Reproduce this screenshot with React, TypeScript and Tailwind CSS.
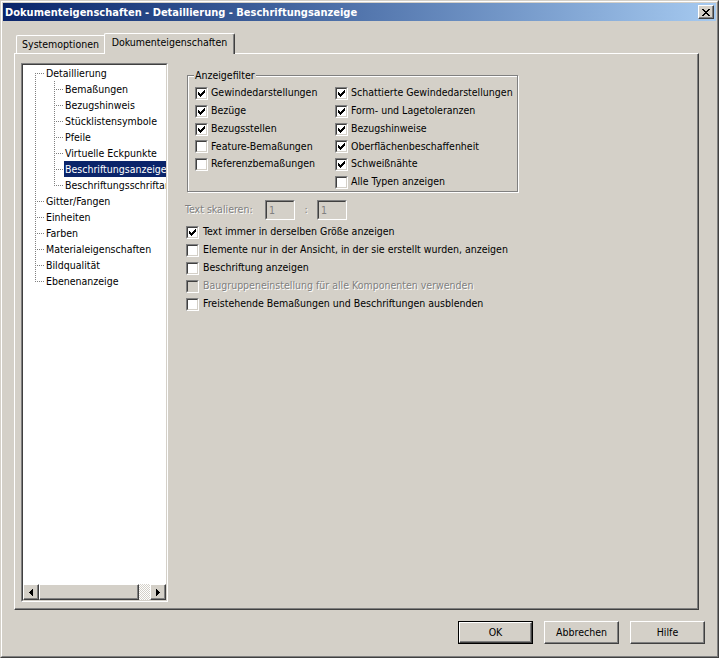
import clsx from 'clsx'

type Conn = 'first' | 'T' | 'L' | 'I'

const treeItems: { label: string; conns: Conn[]; selected?: boolean }[] = [
  { label: 'Detaillierung', conns: ['first'] },
  { label: 'Bemaßungen', conns: ['I', 'T'] },
  { label: 'Bezugshinweis', conns: ['I', 'T'] },
  { label: 'Stücklistensymbole', conns: ['I', 'T'] },
  { label: 'Pfeile', conns: ['I', 'T'] },
  { label: 'Virtuelle Eckpunkte', conns: ['I', 'T'] },
  { label: 'Beschriftungsanzeige', conns: ['I', 'T'], selected: true },
  { label: 'Beschriftungsschriftart', conns: ['I', 'L'] },
  { label: 'Gitter/Fangen', conns: ['T'] },
  { label: 'Einheiten', conns: ['T'] },
  { label: 'Farben', conns: ['T'] },
  { label: 'Materialeigenschaften', conns: ['T'] },
  { label: 'Bildqualität', conns: ['T'] },
  { label: 'Ebenenanzeige', conns: ['L'] },
]

const filterLeft = [
  { label: 'Gewindedarstellungen', checked: true },
  { label: 'Bezüge', checked: true },
  { label: 'Bezugsstellen', checked: true },
  { label: 'Feature-Bemaßungen', checked: false },
  { label: 'Referenzbemaßungen', checked: false },
]

const filterRight = [
  { label: 'Schattierte Gewindedarstellungen', checked: true },
  { label: 'Form- und Lagetoleranzen', checked: true },
  { label: 'Bezugshinweise', checked: true },
  { label: 'Oberflächenbeschaffenheit', checked: true },
  { label: 'Schweißnähte', checked: true },
  { label: 'Alle Typen anzeigen', checked: false },
]

const rowHeights = ['h-[18px]', 'h-[18px]', 'h-[18px]', 'h-[17px]', 'h-[18px]', 'h-[18px]']

const options = [
  { label: 'Text immer in derselben Größe anzeigen', checked: true },
  { label: 'Elemente nur in der Ansicht, in der sie erstellt wurden, anzeigen', checked: false },
  { label: 'Beschriftung anzeigen', checked: false },
  { label: 'Baugruppeneinstellung für alle Komponenten verwenden', checked: false, disabled: true },
  { label: 'Freistehende Bemaßungen und Beschriftungen ausblenden', checked: false },
]

// classic 7x7 check glyph, one rect per pixel run
const checkRuns = [
  [6, 0, 1], [5, 1, 2], [0, 2, 1], [4, 2, 3], [0, 3, 2], [3, 3, 3], [0, 4, 5], [1, 5, 3], [2, 6, 1],
]

function Checkbox({ checked, disabled }: { checked?: boolean; disabled?: boolean }) {
  return (
    <span className="flex-shrink-0 w-[13px] h-[13px] border border-t-[#808080] border-l-[#808080] border-r-white border-b-white">
      <span
        className={clsx(
          'block w-full h-full border border-t-[#404040] border-l-[#404040] border-r-[#d4d0c8] border-b-[#d4d0c8]',
          disabled ? 'bg-[#d4d0c8]' : 'bg-white'
        )}
      >
        {checked && (
          <svg width="9" height="9" viewBox="0 0 9 9" shapeRendering="crispEdges" className="block">
            {checkRuns.map(([x, y, w], i) => (
              <rect key={i} x={x + 1} y={y + 1} width={w} height={1} fill={disabled ? '#808080' : '#000'} />
            ))}
          </svg>
        )}
      </span>
    </span>
  )
}

function Connector({ type }: { type: Conn }) {
  const dots: [number, number][] = []
  const [y0, y1] = type === 'first' ? [8, 15] : type === 'L' ? [0, 8] : [0, 15]
  for (let y = y0; y <= y1; y++) if ((y + 9) % 2 === 1) dots.push([9, y])
  if (type !== 'I') for (let x = 10; x <= 18; x++) if ((x + 8) % 2 === 1) dots.push([x, 8])
  return (
    <svg width="19" height="16" viewBox="0 0 19 16" shapeRendering="crispEdges" className="flex-shrink-0 block">
      {dots.map(([x, y], i) => (
        <rect key={i} x={x} y={y} width={1} height={1} fill="#808080" />
      ))}
    </svg>
  )
}

function Arrow({ dir }: { dir: 'left' | 'right' }) {
  return (
    <svg width="4" height="7" viewBox="0 0 4 7" shapeRendering="crispEdges" className="block">
      {dir === 'left' ? (
        <path d="M3 0h1v7h-1zM2 1h1v5h-1zM1 2h1v3h-1zM0 3h1v1h-1z" fill="#000" />
      ) : (
        <path d="M0 0h1v7h-1zM1 1h1v5h-1zM2 2h1v3h-1zM3 3h1v1h-1z" fill="#000" />
      )}
    </svg>
  )
}

function RaisedBox({ className, children }: { className?: string; children?: React.ReactNode }) {
  return (
    <div
      className={clsx(
        'border border-t-white border-l-white border-r-[#404040] border-b-[#404040] shadow-[inset_-1px_-1px_0_#808080] bg-[#d4d0c8]',
        className
      )}
    >
      {children}
    </div>
  )
}

function Button({ label, isDefault }: { label: string; isDefault?: boolean }) {
  return (
    <div className={clsx('w-[75px] h-[23px]', isDefault && 'border border-black')}>
      <RaisedBox className="w-full h-full flex items-center justify-center text-black">{label}</RaisedBox>
    </div>
  )
}

function FilterRow({ label, checked, h }: { label: string; checked: boolean; h: string }) {
  return (
    <div className={clsx('flex items-center gap-[3px]', h)}>
      <Checkbox checked={checked} />
      <span className="whitespace-nowrap">{label}</span>
    </div>
  )
}

function TextBox() {
  return (
    <div className="w-[30px] h-[20px] border border-t-[#808080] border-l-[#808080] border-r-white border-b-white">
      <div className="w-full h-full border border-t-[#404040] border-l-[#404040] border-r-[#d4d0c8] border-b-[#d4d0c8] bg-[#d4d0c8] pl-[2px] leading-[16px] text-[#808080]">
        1
      </div>
    </div>
  )
}

export default function App() {
  return (
    <div className="w-[719px] h-[658px] bg-[#d4d0c8] text-[10.5px] text-black font-['DejaVu_Sans_Condensed','DejaVu_Sans',sans-serif] select-none">
      <div className="w-full h-full border border-t-[#d4d0c8] border-l-[#d4d0c8] border-r-[#404040] border-b-[#404040]">
        <div className="w-full h-full border border-t-white border-l-white border-r-[#808080] border-b-[#808080] p-px flex flex-col">
          {/* Title bar */}
          <div className="h-[18px] flex items-center justify-between bg-gradient-to-r from-[#0a246a] to-[#a6caf0] pl-[2px] pr-[2px]">
            <span className="text-white font-bold text-[11px] whitespace-nowrap leading-none">
              Dokumenteigenschaften - Detaillierung - Beschriftungsanzeige
            </span>
            <RaisedBox className="w-[16px] h-[14px] flex items-center justify-center">
              <svg width="8" height="7" viewBox="0 0 8 7" shapeRendering="crispEdges" className="block">
                <path d="M0 0h2v1h-2zM6 0h2v1h-2zM1 1h2v1h-2zM5 1h2v1h-2zM2 2h4v1h-4zM3 3h2v1h-2zM2 4h4v1h-4zM1 5h2v1h-2zM5 5h2v1h-2zM0 6h2v1h-2zM6 6h2v1h-2z" fill="#000" />
              </svg>
            </RaisedBox>
          </div>

          {/* Tabs */}
          <div className="relative z-10 flex items-end h-[20px] mt-[12px] pl-[13px]">
            <div className="w-[88px] h-[18px] border-t border-l border-white rounded-tl-[2px] flex items-center justify-center pt-[1px]">
              Systemoptionen
            </div>
            <div className="w-[131px] h-[21px] -mb-px bg-[#d4d0c8] border-t border-l border-white border-r border-r-[#404040] shadow-[inset_-1px_0_0_#808080] rounded-tl-[2px] rounded-tr-[2px] flex items-center justify-center pb-[3px]">
              Dokumenteigenschaften
            </div>
          </div>

          {/* Tab panel */}
          <div className="ml-[11px] w-[685px] h-[557px] border border-t-white border-l-white border-r-[#404040] border-b-[#404040] shadow-[inset_-1px_-1px_0_#808080] flex pl-[6px] pt-[9px]">
            {/* Tree view */}
            <div className="w-[147px] h-[539px] flex-shrink-0 border border-t-[#808080] border-l-[#808080] border-r-white border-b-white">
              <div className="w-full h-full border border-t-[#404040] border-l-[#404040] border-r-[#d4d0c8] border-b-[#d4d0c8] bg-white flex flex-col">
                <div className="flex-1 overflow-hidden pl-[3px]">
                  {treeItems.map((item) => (
                    <div key={item.label} className="flex h-[16px] items-center whitespace-nowrap">
                      {item.conns.map((c, i) => (
                        <Connector key={i} type={c} />
                      ))}
                      <span
                        className={clsx(
                          'h-[16px] leading-[16px] px-[1px]',
                          item.selected && 'bg-[#0a246a] text-white'
                        )}
                      >
                        {item.label}
                      </span>
                    </div>
                  ))}
                </div>
                {/* Horizontal scrollbar */}
                <div className="h-[16px] flex">
                  <RaisedBox className="w-[16px] h-[16px] flex items-center justify-center">
                    <Arrow dir="left" />
                  </RaisedBox>
                  <RaisedBox className="w-[100px] h-[16px]" />
                  <div className="flex-1 bg-[repeating-conic-gradient(#d4d0c8_0_25%,#ffffff_0_50%)] bg-[length:2px_2px]" />
                  <RaisedBox className="w-[16px] h-[16px] flex items-center justify-center">
                    <Arrow dir="right" />
                  </RaisedBox>
                </div>
              </div>
            </div>

            {/* Right column */}
            <div className="ml-[17px] pt-[12px] flex flex-col">
              {/* Anzeigefilter group */}
              <div className="relative ml-[2px] w-[331px] h-[117px] border border-[#808080] shadow-[inset_1px_1px_0_#fff,1px_1px_0_#fff] flex pt-[8px] pl-[7px]">
                <span className="absolute -top-[7px] left-[6px] px-[1px] bg-[#d4d0c8] leading-[13px]">Anzeigefilter</span>
                <div className="w-[140px] flex flex-col">
                  {filterLeft.map((f, i) => (
                    <FilterRow key={f.label} label={f.label} checked={f.checked} h={rowHeights[i]} />
                  ))}
                </div>
                <div className="flex flex-col">
                  {filterRight.map((f, i) => (
                    <FilterRow key={f.label} label={f.label} checked={f.checked} h={rowHeights[i]} />
                  ))}
                </div>
              </div>

              {/* Text skalieren */}
              <div className="flex items-center h-[20px] mt-[8px]">
                <span className="w-[80px] text-[#808080] [text-shadow:1px_1px_0_#fff]">Text skalieren:</span>
                <TextBox />
                <span className="w-[22px] text-center text-[#808080] [text-shadow:1px_1px_0_#fff]">:</span>
                <TextBox />
              </div>

              {/* Options */}
              <div className="mt-[3px] pl-[1px] flex flex-col">
                {options.map((o) => (
                  <div key={o.label} className="flex items-center gap-[4px] h-[18px]">
                    <Checkbox checked={o.checked} disabled={o.disabled} />
                    <span
                      className={clsx(
                        'whitespace-nowrap',
                        o.disabled && 'text-[#808080] [text-shadow:1px_1px_0_#fff]'
                      )}
                    >
                      {o.label}
                    </span>
                  </div>
                ))}
              </div>
            </div>
          </div>

          {/* Dialog buttons */}
          <div className="flex justify-end gap-[11px] pr-[11px] mt-[11px]">
            <Button label="OK" isDefault />
            <Button label="Abbrechen" />
            <Button label="Hilfe" />
          </div>
        </div>
      </div>
    </div>
  )
}
